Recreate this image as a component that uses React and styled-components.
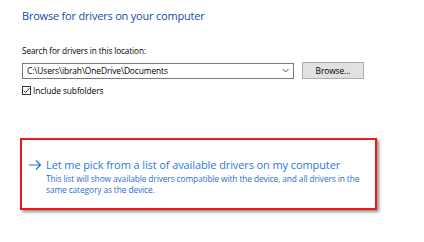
import React from "react";
import styled, { createGlobalStyle } from "styled-components";

const GlobalStyle = createGlobalStyle`
  html, body {
    margin: 0;
    padding: 0;
    background: #ffffff;
  }
  body {
    font-family: "Open Sans", "Noto Sans", sans-serif;
    color: #000;
  }
`;

const Page = styled.div`
  width: 424px;
  height: 242px;
  overflow: hidden;
  padding: 8px 0 0 22px;
  box-sizing: border-box;
`;

const Title = styled.div`
  color: #2249a6;
  font-size: 11px;
  letter-spacing: -0.2px;
  line-height: 16px;
  margin-bottom: 21px;
`;

const Label = styled.div`
  font-size: 8.2px;
  letter-spacing: -0.1px;
  line-height: 12px;
  margin-bottom: 5px;
`;

const PathRow = styled.div`
  display: flex;
  align-items: center;
  gap: 8px;
`;

const Combo = styled.div`
  width: 272px;
  height: 16px;
  box-sizing: border-box;
  border: 1px solid #7a7a7a;
  display: flex;
  align-items: center;
  justify-content: space-between;
  padding: 0 4px 0 4px;
  font-size: 8.4px;
  letter-spacing: -0.1px;
  background: #fff;
`;

const Button = styled.div`
  width: 62px;
  height: 17px;
  box-sizing: border-box;
  border: 1px solid #adadad;
  background: #e1e1e1;
  display: flex;
  align-items: center;
  justify-content: center;
  font-size: 8.4px;
  letter-spacing: -0.1px;
`;

const CheckRow = styled.label`
  display: flex;
  align-items: center;
  gap: 2px;
  margin-top: 6px;
  font-size: 8.4px;
  letter-spacing: -0.1px;
`;

const Box = styled.span`
  width: 9px;
  height: 9px;
  box-sizing: border-box;
  border: 1px solid #333;
  display: flex;
  align-items: center;
  justify-content: center;
`;

const Highlight = styled.div`
  margin: 42px 0 0 -2px;
  width: 357px;
  height: 72px;
  box-sizing: border-box;
  border: 2px solid #f01818;
  box-shadow: 2px 2px 3px rgba(0, 0, 0, 0.45);
  padding: 17px 0 0 6px;
  display: flex;
  gap: 4px;
`;

const Arrow = styled.span`
  width: 14px;
  height: 16px;
  display: flex;
  align-items: center;
`;

const Option = styled.div`
  display: flex;
  flex-direction: column;
`;

const OptionTitle = styled.div`
  color: #2a7bd6;
  font-size: 11px;
  letter-spacing: -0.1px;
  line-height: 16px;
`;

const OptionText = styled.div`
  color: #1f6fd1;
  font-size: 8.35px;
  letter-spacing: -0.1px;
  line-height: 11px;
  width: 330px;
`;

export default function App() {
  return (
    <>
      <GlobalStyle />
      <Page>
        <Title>Browse for drivers on your computer</Title>
        <Label>Search for drivers in this location:</Label>
        <PathRow>
          <Combo>
            <span>C:\Users\ibrah\OneDrive\Documents</span>
            <svg width="7" height="5" viewBox="0 0 7 5">
              <path d="M0.5 1 L3.5 4 L6.5 1" fill="none" stroke="#444" strokeWidth="0.9" />
            </svg>
          </Combo>
          <Button>Browse...</Button>
        </PathRow>
        <CheckRow>
          <Box>
            <svg width="7" height="7" viewBox="0 0 7 7">
              <path d="M0.8 3.6 L2.7 5.5 L6.3 1.2" fill="none" stroke="#222" strokeWidth="0.9" />
            </svg>
          </Box>
          <span>Include subfolders</span>
        </CheckRow>
        <Highlight>
          <Arrow>
            <svg width="14" height="16" viewBox="0 0 14 16">
              <path d="M1 8 H12.5 M8 3.5 L12.5 8 L8 12.5" fill="none" stroke="#1f6fd1" strokeWidth="1.2" />
            </svg>
          </Arrow>
          <Option>
            <OptionTitle>Let me pick from a list of available drivers on my computer</OptionTitle>
            <OptionText>
              This list will show available drivers compatible with the device, and all drivers in the
              same category as the device.
            </OptionText>
          </Option>
        </Highlight>
      </Page>
    </>
  );
}
